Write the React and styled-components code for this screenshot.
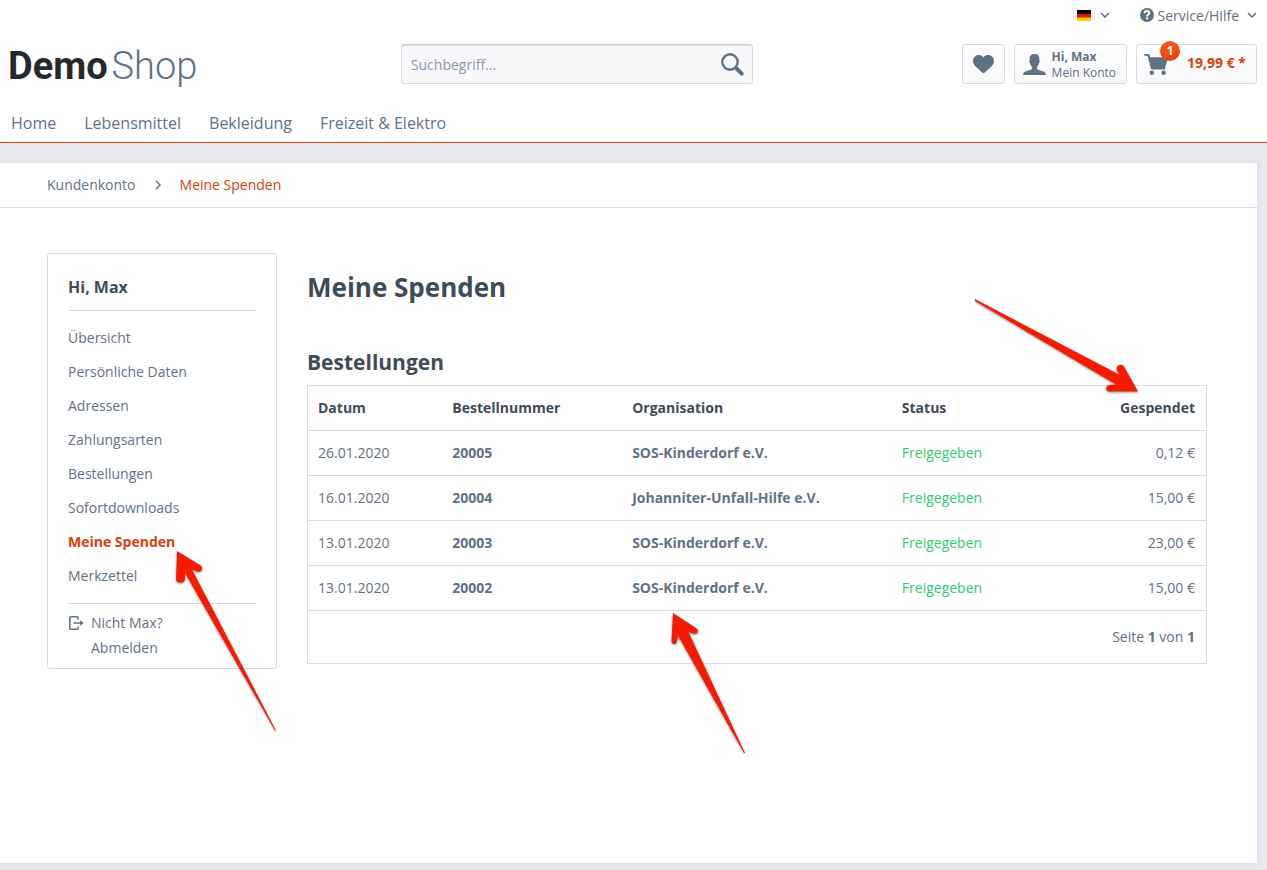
import { useState } from 'react';
import styled, { createGlobalStyle, css } from 'styled-components';

const colors = {
  primary: '#d9400b',
  text: '#5f7285',
  dark: '#3f4c58',
  border: '#dadae5',
  page: '#e9e9ef',
  success: '#2ecc71',
};

const GlobalStyle = createGlobalStyle`
  * {
    box-sizing: border-box;
  }

  body {
    background-color: ${colors.page};
    color: ${colors.text};
    font-family: 'Open Sans', 'Liberation Sans', sans-serif;
    font-size: 14px;
    line-height: 24px;
    margin: 0;
  }

  a {
    color: inherit;
    text-decoration: none;
  }

  button,
  input {
    color: inherit;
    font-family: inherit;
    font-size: 14px;
  }
`;

const Header = styled.header`
  background-color: #fff;
  border-bottom: 1px solid ${colors.primary};
`;

const TopBar = styled.div`
  align-items: center;
  display: flex;
  gap: 30px;
  height: 30px;
  justify-content: flex-end;
  padding: 0 10px;
`;

const TopButton = styled.button`
  align-items: center;
  background: none;
  border: 0;
  cursor: pointer;
  display: flex;
  gap: ${(props) => props.$gap || '4px'};
  padding: 0;

  > svg:last-child {
    margin-left: ${(props) => (props.$gap ? '0' : '4px')};
  }
`;

const HeaderMain = styled.div`
  align-items: center;
  display: grid;
  grid-template-columns: 39fr 35fr 50fr;
  padding: 14px 10px 0 8px;
`;

const Logo = styled.a`
  color: #25292d;
  display: flex;
  font-family: Roboto, 'Liberation Sans', sans-serif;
  font-size: 38px;
  font-weight: 700;
  gap: 4px;
  height: 40px;
  line-height: 44px;
`;

const LogoLight = styled.span`
  color: ${colors.text};
  font-weight: 300;
`;

const SearchForm = styled.form`
  align-items: center;
  background-color: #f8f8fa;
  border: 1px solid ${colors.border};
  border-radius: 3px;
  border-top-color: #cbcbdb;
  box-shadow: inset 0 1px 1px ${colors.border};
  display: flex;
  height: 40px;
`;

const SearchInput = styled.input`
  background: none;
  border: 0;
  flex: 1;
  height: 100%;
  min-width: 0;
  outline: 0;
  padding: 0 9px;

  &::placeholder {
    color: #8798a9;
    opacity: 1;
  }
`;

const SearchButton = styled.button`
  background: none;
  border: 0;
  cursor: pointer;
  display: flex;
  padding: 0 8px;
`;

const ShopActions = styled.div`
  display: flex;
  gap: 9px;
  justify-content: flex-end;
`;

const ActionLink = styled.a`
  align-items: center;
  background: linear-gradient(#fff, #f8f8fa);
  border: 1px solid ${colors.border};
  border-radius: 3px;
  display: flex;
  gap: ${(props) => props.$gap || '6px'};
  height: 40px;
  padding: 0 10px 0 ${(props) => props.$left || '10px'};
  position: relative;
`;

const AccountText = styled.span`
  display: grid;
  font-size: 12px;
  line-height: 16px;
  padding-top: 2px;
`;

const Price = styled.strong`
  color: ${colors.primary};
  padding-bottom: 2px;
`;

const Badge = styled.span`
  background: linear-gradient(#fb5a1e, #e3430c);
  border-radius: 50%;
  color: #fff;
  font-size: 12px;
  font-weight: 700;
  height: 20px;
  left: 23px;
  line-height: 20px;
  position: absolute;
  text-align: center;
  top: -4px;
  width: 20px;
`;

const Nav = styled.nav`
  display: flex;
  font-size: 16px;
  gap: 28px;
  line-height: 24px;
  padding: 27px 11px 7px;
`;

const Container = styled.div`
  background-color: #fff;
  box-shadow: 0 0 4px 1px #dcdce6;
  margin: 20px 10px 7px 0;
  min-height: 700px;
  position: relative;
`;

const Breadcrumb = styled.nav`
  align-items: center;
  border-bottom: 1px solid ${colors.border};
  display: flex;
  gap: 19px;
  height: 45px;
  padding: 0 47px;
`;

const Crumb = styled.a`
  color: ${(props) => props.$active && colors.primary};
`;

const Content = styled.div`
  align-items: flex-start;
  display: flex;
  gap: 30px;
  padding: 45px 50px 45px 47px;
`;

const Sidebar = styled.aside`
  border: 1px solid ${colors.border};
  border-radius: 3px;
  flex: 0 0 230px;
  padding: 20px 20px 8px;
`;

const SidebarTitle = styled.h2`
  border-bottom: 1px solid ${colors.border};
  color: ${colors.dark};
  font-size: 16px;
  line-height: 26px;
  margin: 0;
  padding-bottom: 10px;
`;

const Menu = styled.ul`
  border-bottom: 1px solid ${colors.border};
  list-style: none;
  margin: 0;
  padding: 10px 0;
`;

const MenuLink = styled.a`
  display: block;
  line-height: 34px;
  ${(props) =>
    props.$active &&
    css`
      color: ${colors.primary};
      font-weight: 700;
    `}
`;

const Logout = styled.a`
  display: flex;
  gap: 7px;
  line-height: 25px;
  padding-top: 6px;

  svg {
    margin-top: 6px;
  }
`;

const LogoutText = styled.span`
  display: grid;
`;

const Main = styled.main`
  flex: 1;
  min-width: 0;
`;

const Title = styled.h1`
  color: ${colors.dark};
  font-size: 26px;
  line-height: 36px;
  margin: 16px 0 42px;
`;

const Subtitle = styled.h2`
  color: ${colors.dark};
  font-size: 21px;
  line-height: 30px;
  margin: 0 0 8px;
`;

const Table = styled.table`
  border-collapse: collapse;
  table-layout: fixed;
  width: 100%;
`;

const Row = styled.tr`
  border: 1px solid ${colors.border};
`;

const HeadCell = styled.th`
  color: ${colors.dark};
  height: 45px;
  padding: 0 11px 0 10px;
  text-align: ${(props) => props.$align || 'left'};
  width: ${(props) => props.$width};
`;

const Cell = styled.td`
  color: ${(props) => props.$color};
  font-weight: ${(props) => props.$bold && 700};
  height: ${(props) => (props.$foot ? '53px' : '45px')};
  padding: 0 11px 0 10px;
  text-align: ${(props) => props.$align || 'left'};
`;

const Pointer = styled.svg`
  filter: drop-shadow(0 1px 1px rgba(0, 0, 0, 0.45));
  left: ${(props) => props.$left};
  overflow: visible;
  pointer-events: none;
  position: absolute;
  right: ${(props) => props.$right};
  top: ${(props) => props.$top};
`;

const Chevron = ({ right }) => (
  <svg width={right ? 6 : 10} height={right ? 10 : 6} viewBox={right ? '0 0 6 10' : '0 0 10 6'} aria-hidden="true">
    <path
      d={right ? 'M1 1l4 4-4 4' : 'M1 1l4 4 4-4'}
      fill="none"
      stroke={colors.text}
      strokeWidth="1.5"
    />
  </svg>
);

const FlagIcon = () => (
  <svg width="14" height="11" aria-hidden="true">
    <path d="M0 0h14v4H0z" fill="#000" />
    <path d="M0 4h14v4H0z" fill="#dd1800" />
    <path d="M0 7.5h14V11H0z" fill="#ffcd00" />
  </svg>
);

const HelpIcon = () => (
  <svg width="14" height="14" viewBox="0 0 14 14" aria-hidden="true">
    <circle cx="7" cy="7" r="7" fill={colors.text} />
    <path d="M4.6 5.2C4.7 3.7 5.7 3.1 7 3.1s2.300.6 2.300 1.900C9.300 6.500 7.100 6.500 7.100 8.500" fill="none" stroke="#fff" strokeWidth="2" />
    <path d="M6.100 9.400h2v1.900h-2z" fill="#fff" />
  </svg>
);

const SearchIcon = () => (
  <svg width="23" height="23" viewBox="0 0 23 23" aria-hidden="true">
    <circle cx="9" cy="9" r="7.7" fill="none" stroke={colors.text} strokeWidth="2.4" />
    <path d="M15.5 15.5l5.200 5.200" stroke={colors.text} strokeWidth="4" strokeLinecap="round" />
  </svg>
);

const HeartIcon = () => (
  <svg width="21" height="18" viewBox="0 0 21 18" fill={colors.text} aria-hidden="true">
    <path d="M10.5 2.200C11.600.7 13.300 0 15.200 0 18.500 0 21 2.500 21 5.900c0 2.600-1.300 4.300-3.300 6.200L12.200 17.200c-1.200 1-2.200 1-3.400 0L3.300 12.100C1.300 10.200 0 8.500 0 5.900 0 2.500 2.500 0 5.800 0c1.900 0 3.600.7 4.700 2.200z" />
  </svg>
);

const AccountIcon = () => (
  <svg width="23" height="21" viewBox="0 0 23 21" fill={colors.text} aria-hidden="true">
    <path d="M11.500 0c3.300 0 5 2 4.900 4.700l-.1 1.600c.8.300.6 1.800-.3 2.900-.4 1.700-1 2.700-1.900 3.600v2.100c.4.800 4.400 1.700 6.400 2.600 1.500.7 2.300 1.800 2.400 3.500H.1c.1-1.700.9-2.800 2.400-3.500 2-.9 6-1.800 6.400-2.600v-2.100C8 11.900 7.400 10.900 7 9.200c-.9-1.100-1.100-2.600-.3-2.900l-.1-1.600C6.500 2 8.200 0 11.500 0z" />
  </svg>
);

const CartIcon = () => (
  <svg width="25" height="21" viewBox="0 0 25 21" fill={colors.text} aria-hidden="true">
    <path d="M.8 0h3.600c.6 0 1 .3 1.200.9l.6 2.300h18.300l-3.300 9.800v2.400H7.800c-.6 0-.9-.3-1-.8L3.500 1.700H.8A.8.8 0 0 1 .8 0z" />
    <circle cx="7.800" cy="18.800" r="2.200" />
    <circle cx="19.600" cy="18.800" r="2.200" />
  </svg>
);

const LogoutIcon = () => (
  <svg width="16" height="14" viewBox="0 0 16 14" aria-hidden="true">
    <path d="M10 3.600V1.800a1 1 0 0 0-1-1H2.800a1 1 0 0 0-1 1v10.400a1 1 0 0 0 1 1H9a1 1 0 0 0 1-1v-1.800" fill="none" stroke={colors.text} strokeWidth="1.600" />
    <path d="M5.500 6.200h6.600V4.200L15.800 7l-3.700 2.800V7.800H5.500z" fill={colors.text} />
  </svg>
);

const menuItems = [
  'Übersicht',
  'Persönliche Daten',
  'Adressen',
  'Zahlungsarten',
  'Bestellungen',
  'Sofortdownloads',
  'Meine Spenden',
  'Merkzettel',
];

const donations = [
  { date: '26.01.2020', number: '20005', organisation: 'SOS-Kinderdorf e.V.', amount: '0,12 €' },
  { date: '16.01.2020', number: '20004', organisation: 'Johanniter-Unfall-Hilfe e.V.', amount: '15,00 €' },
  { date: '13.01.2020', number: '20003', organisation: 'SOS-Kinderdorf e.V.', amount: '23,00 €' },
  { date: '13.01.2020', number: '20002', organisation: 'SOS-Kinderdorf e.V.', amount: '15,00 €' },
];

const App = () => {
  const [search, setSearch] = useState('');

  return (
    <>
      <GlobalStyle />
      <Header>
        <TopBar>
          <TopButton type="button" aria-label="Deutsch" $gap="9px">
            <FlagIcon />
            <Chevron />
          </TopButton>
          <TopButton type="button">
            <HelpIcon />
            Service/Hilfe
            <Chevron />
          </TopButton>
        </TopBar>
        <HeaderMain>
          <Logo href="#">
            Demo<LogoLight>Shop</LogoLight>
          </Logo>
          <SearchForm role="search" onSubmit={(e) => e.preventDefault()}>
            <SearchInput
              type="text"
              aria-label="Suchbegriff"
              placeholder="Suchbegriff..."
              value={search}
              onChange={(e) => setSearch(e.target.value)}
            />
            <SearchButton type="submit" aria-label="Suchen">
              <SearchIcon />
            </SearchButton>
          </SearchForm>
          <ShopActions>
            <ActionLink href="#" aria-label="Merkzettel">
              <HeartIcon />
            </ActionLink>
            <ActionLink href="#" $left="8px">
              <AccountIcon />
              <AccountText>
                <strong>Hi, Max</strong>
                <span>Mein Konto</span>
              </AccountText>
            </ActionLink>
            <ActionLink href="#" $left="7px" $gap="18px">
              <CartIcon />
              <Badge>1</Badge>
              <Price>19,99 € *</Price>
            </ActionLink>
          </ShopActions>
        </HeaderMain>
        <Nav>
          <a href="#">Home</a>
          <a href="#">Lebensmittel</a>
          <a href="#">Bekleidung</a>
          <a href="#">Freizeit &amp; Elektro</a>
        </Nav>
      </Header>
      <Container>
        <Breadcrumb>
          <Crumb href="#">Kundenkonto</Crumb>
          <Chevron right />
          <Crumb href="#" $active>
            Meine Spenden
          </Crumb>
        </Breadcrumb>
        <Content>
          <Sidebar>
            <SidebarTitle>Hi, Max</SidebarTitle>
            <Menu>
              {menuItems.map((item) => (
                <li key={item}>
                  <MenuLink href="#" $active={item === 'Meine Spenden'}>
                    {item}
                  </MenuLink>
                </li>
              ))}
            </Menu>
            <Logout href="#">
              <LogoutIcon />
              <LogoutText>
                <span>Nicht Max?</span>
                <span>Abmelden</span>
              </LogoutText>
            </Logout>
          </Sidebar>
          <Main>
            <Title>Meine Spenden</Title>
            <Subtitle>Bestellungen</Subtitle>
            <Table>
              <thead>
                <Row>
                  <HeadCell $width="15%">Datum</HeadCell>
                  <HeadCell $width="20%">Bestellnummer</HeadCell>
                  <HeadCell $width="30%">Organisation</HeadCell>
                  <HeadCell $width="20%">Status</HeadCell>
                  <HeadCell $width="15%" $align="right">
                    Gespendet
                  </HeadCell>
                </Row>
              </thead>
              <tbody>
                {donations.map((donation) => (
                  <Row key={donation.number}>
                    <Cell>{donation.date}</Cell>
                    <Cell $bold>{donation.number}</Cell>
                    <Cell $bold>{donation.organisation}</Cell>
                    <Cell $color={colors.success}>Freigegeben</Cell>
                    <Cell $align="right">{donation.amount}</Cell>
                  </Row>
                ))}
              </tbody>
              <tfoot>
                <Row>
                  <Cell colSpan={5} $align="right" $foot>
                    Seite <strong>1</strong> von <strong>1</strong>
                  </Cell>
                </Row>
              </tfoot>
            </Table>
          </Main>
        </Content>
        <Pointer $right="119px" $top="136px" width="163" height="93" fill="#f61a00" aria-hidden="true">
          <path d="M0 0L145 76l-3-4.500c-2-5 4-8 7-4L163 92.500h-28c-5 0-5-6.500 0-6.500l6-.5L0 2z" />
        </Pointer>
        <Pointer $left="176px" $top="388px" width="100" height="180" fill="#f61a00" aria-hidden="true">
          <path d="M1 0L24 14c4.500 3 1.500 8-3 6.500l-5-2L100 179.500h-1L9 22v6c0 5-9 5-9 0z" />
        </Pointer>
        <Pointer $left="671px" $top="450px" width="74" height="141" fill="#f61a00" aria-hidden="true">
          <path d="M2 0L25 15c4 3 1 7-3 5.500l-4.500-1.500L74 140h-1L7 22.500l-1 6c-1 4-6 3-5.500-1z" />
        </Pointer>
      </Container>
    </>
  );
};

export default App;
